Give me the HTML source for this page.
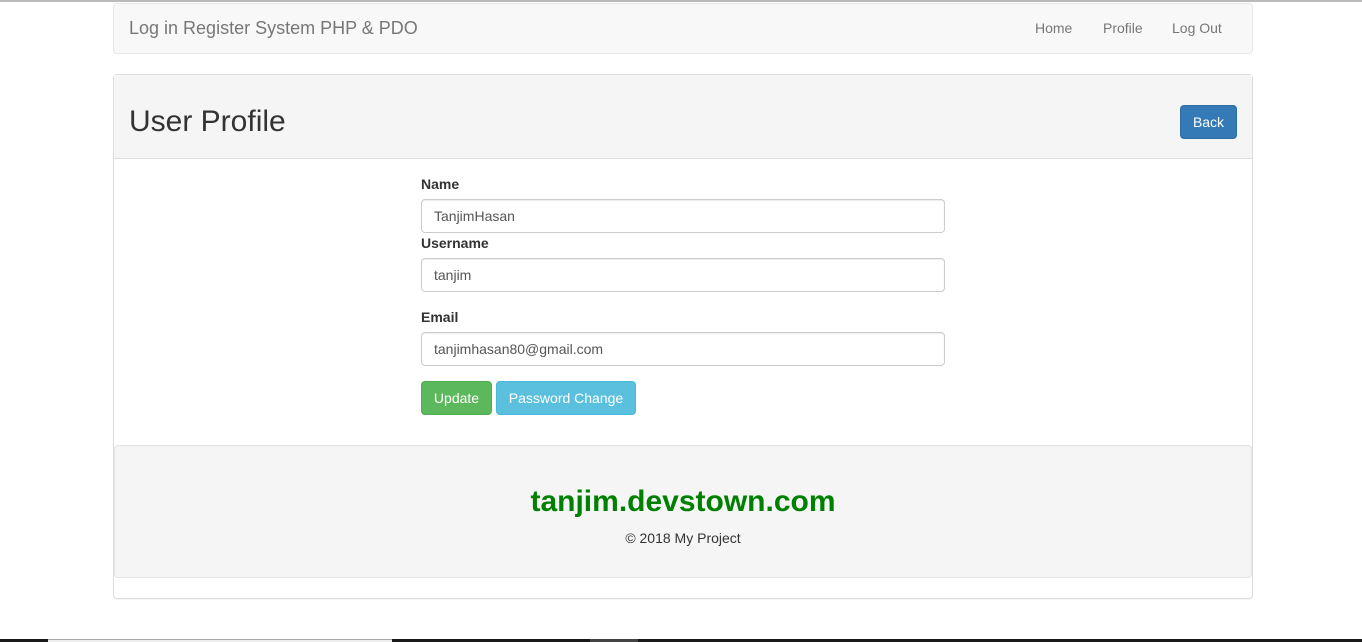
<!DOCTYPE html>
<html><head><style>
*{box-sizing:border-box}
body{margin:0;width:1362px;height:642px;background:#fff;font-family:"Liberation Sans",sans-serif;font-size:14px;color:#333;position:relative;overflow:hidden}
.topline{position:absolute;left:0;top:0;width:1362px;height:2px;background:#bbb}
.nav{position:absolute;left:113px;top:3px;width:1140px;height:51px;background:#f8f8f8;border:1px solid #e7e7e7;border-radius:4px}
.brand{position:absolute;left:15px;top:14px;font-size:18px;color:#777}
.nav a{position:absolute;top:16px;color:#777;font-size:14px}
.panel{position:absolute;left:113px;top:74px;width:1140px;height:525px;border:1px solid #ddd;border-radius:4px;box-shadow:0 1px 1px rgba(0,0,0,.05)}
.ph{position:absolute;left:0;top:0;width:1138px;height:84px;background:#f5f5f5;border-bottom:1px solid #ddd}
.ph h2{position:absolute;left:15px;top:30px;margin:0;font-size:30px;font-weight:normal;color:#333}
.back{position:absolute;left:1066px;top:30px;width:57px;height:34px;background:#337ab7;border:1px solid #2e6da4;border-radius:4px;color:#fff;text-align:center;line-height:32px}
label{position:absolute;left:307px;font-weight:bold;font-size:14px}
.in{position:absolute;left:307px;width:524px;height:34px;border:1px solid #ccc;border-radius:4px;padding:0 12px;line-height:32px;color:#555;box-shadow:inset 0 1px 1px rgba(0,0,0,.075)}
.btn{position:absolute;top:306px;height:34px;border-radius:4px;color:#fff;line-height:32px;text-align:center}
.well{position:absolute;left:0;top:370px;width:1138px;height:133px;background:#f5f5f5;border:1px solid #e3e3e3;border-radius:4px}
.well h1{position:absolute;left:0;width:100%;top:39px;margin:0;text-align:center;color:green;font-size:30px;font-weight:bold}
.well p{position:absolute;left:0;width:100%;top:84px;margin:0;text-align:center;font-size:14px}
.bot{position:absolute;left:0;top:639px;width:1362px;height:3px;background:#1a1a1a}
</style></head><body>
<div class="topline"></div>
<div class="nav"><span class="brand">Log in Register System PHP &amp; PDO</span>
<a style="left:921px">Home</a><a style="left:989px">Profile</a><a style="left:1058px">Log Out</a></div>
<div class="panel">
<div class="ph"><h2>User Profile</h2><div class="back">Back</div></div>
<label style="top:101px">Name</label>
<div class="in" style="top:124px">TanjimHasan</div>
<label style="top:160px">Username</label>
<div class="in" style="top:183px">tanjim</div>
<label style="top:234px">Email</label>
<div class="in" style="top:257px">tanjimhasan80@gmail.com</div>
<div class="btn" style="left:307px;width:71px;background:#5cb85c;border:1px solid #4cae4c">Update</div>
<div class="btn" style="left:382px;width:140px;background:#5bc0de;border:1px solid #46b8da">Password Change</div>
<div class="well"><h1>tanjim.devstown.com</h1><p>© 2018 My Project</p></div>
</div>
<div class="bot"><div style="position:absolute;left:48px;width:344px;height:3px;background:#eee;border-top:1px solid #aaa"></div><div style="position:absolute;left:590px;width:48px;height:3px;background:#444"></div></div>
</body></html>
